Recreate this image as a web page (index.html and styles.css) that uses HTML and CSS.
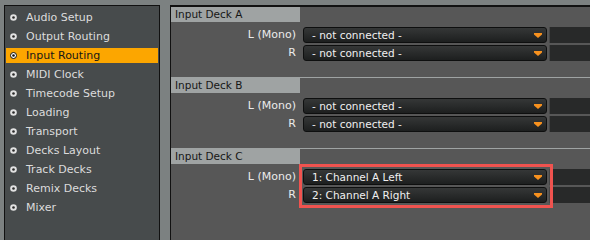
FILE: index.html
```html
<!DOCTYPE html>
<html>
<head>
<meta charset="utf-8">
<link rel="stylesheet" href="styles.css">
</head>
<body>
<div class="app">
  <nav class="sidebar">
    <ul class="menu">
      <li class="item"><svg class="dot" viewBox="0 0 7 7"><circle cx="3.5" cy="3.5" r="3.3" fill="#e2e2e2"/><circle cx="3.5" cy="3.5" r="1.3" fill="#2a2a2a"/></svg><span>Audio Setup</span></li>
      <li class="item"><svg class="dot" viewBox="0 0 7 7"><circle cx="3.5" cy="3.5" r="3.3" fill="#e2e2e2"/><circle cx="3.5" cy="3.5" r="1.3" fill="#2a2a2a"/></svg><span>Output Routing</span></li>
      <li class="item active"><svg class="dot" viewBox="0 0 7 7"><circle cx="3.5" cy="3.5" r="3" fill="#ffffff" stroke="#111" stroke-width="1"/><circle cx="3.5" cy="3.5" r="1.3" fill="#111"/></svg><span>Input Routing</span></li>
      <li class="item"><svg class="dot" viewBox="0 0 7 7"><circle cx="3.5" cy="3.5" r="3.3" fill="#e2e2e2"/><circle cx="3.5" cy="3.5" r="1.3" fill="#2a2a2a"/></svg><span>MIDI Clock</span></li>
      <li class="item"><svg class="dot" viewBox="0 0 7 7"><circle cx="3.5" cy="3.5" r="3.3" fill="#e2e2e2"/><circle cx="3.5" cy="3.5" r="1.3" fill="#2a2a2a"/></svg><span>Timecode Setup</span></li>
      <li class="item"><svg class="dot" viewBox="0 0 7 7"><circle cx="3.5" cy="3.5" r="3.3" fill="#e2e2e2"/><circle cx="3.5" cy="3.5" r="1.3" fill="#2a2a2a"/></svg><span>Loading</span></li>
      <li class="item"><svg class="dot" viewBox="0 0 7 7"><circle cx="3.5" cy="3.5" r="3.3" fill="#e2e2e2"/><circle cx="3.5" cy="3.5" r="1.3" fill="#2a2a2a"/></svg><span>Transport</span></li>
      <li class="item"><svg class="dot" viewBox="0 0 7 7"><circle cx="3.5" cy="3.5" r="3.3" fill="#e2e2e2"/><circle cx="3.5" cy="3.5" r="1.3" fill="#2a2a2a"/></svg><span>Decks Layout</span></li>
      <li class="item"><svg class="dot" viewBox="0 0 7 7"><circle cx="3.5" cy="3.5" r="3.3" fill="#e2e2e2"/><circle cx="3.5" cy="3.5" r="1.3" fill="#2a2a2a"/></svg><span>Track Decks</span></li>
      <li class="item"><svg class="dot" viewBox="0 0 7 7"><circle cx="3.5" cy="3.5" r="3.3" fill="#e2e2e2"/><circle cx="3.5" cy="3.5" r="1.3" fill="#2a2a2a"/></svg><span>Remix Decks</span></li>
      <li class="item"><svg class="dot" viewBox="0 0 7 7"><circle cx="3.5" cy="3.5" r="3.3" fill="#e2e2e2"/><circle cx="3.5" cy="3.5" r="1.3" fill="#2a2a2a"/></svg><span>Mixer</span></li>
    </ul>
  </nav>

  <main class="panel">
    <section class="deck">
      <div class="deck-head"><span class="deck-title">Input Deck A</span></div>
      <div class="deck-body">
        <span class="label">L (Mono)</span>
        <div class="select"><span>- not connected -</span><svg class="arrow" viewBox="0 0 8 5"><polygon points="0,0 8,0 8,1.4 4,5 0,1.4" fill="#f7911e"/></svg></div>
        <div class="aux"></div>
        <span class="label">R</span>
        <div class="select"><span>- not connected -</span><svg class="arrow" viewBox="0 0 8 5"><polygon points="0,0 8,0 8,1.4 4,5 0,1.4" fill="#f7911e"/></svg></div>
        <div class="aux"></div>
      </div>
    </section>

    <section class="deck">
      <div class="deck-head"><span class="deck-title">Input Deck B</span></div>
      <div class="deck-body">
        <span class="label">L (Mono)</span>
        <div class="select"><span>- not connected -</span><svg class="arrow" viewBox="0 0 8 5"><polygon points="0,0 8,0 8,1.4 4,5 0,1.4" fill="#f7911e"/></svg></div>
        <div class="aux"></div>
        <span class="label">R</span>
        <div class="select"><span>- not connected -</span><svg class="arrow" viewBox="0 0 8 5"><polygon points="0,0 8,0 8,1.4 4,5 0,1.4" fill="#f7911e"/></svg></div>
        <div class="aux"></div>
      </div>
    </section>

    <section class="deck">
      <div class="deck-head"><span class="deck-title">Input Deck C</span></div>
      <div class="deck-body">
        <span class="label">L (Mono)</span>
        <div class="select"><span>1: Channel A Left</span><svg class="arrow" viewBox="0 0 8 5"><polygon points="0,0 8,0 8,1.4 4,5 0,1.4" fill="#f7911e"/></svg></div>
        <div class="aux"></div>
        <span class="label">R</span>
        <div class="select"><span>2: Channel A Right</span><svg class="arrow" viewBox="0 0 8 5"><polygon points="0,0 8,0 8,1.4 4,5 0,1.4" fill="#f7911e"/></svg></div>
        <div class="aux"></div>
        <div class="mark"></div>
      </div>
    </section>
  </main>
</div>
</body>
</html>
```

FILE: styles.css
```css
html, body {
  margin: 0;
  height: 100%;
  overflow: hidden;
}

body {
  background: #7c8181;
  font-family: "DejaVu Sans", "Liberation Sans", sans-serif;
}

.app {
  box-sizing: border-box;
  display: flex;
  gap: 10px;
  padding: 5px 0 0 4px;
  height: 100%;
}

/* Sidebar */
.sidebar {
  width: 152px;
  flex: none;
  border: 1px solid #111;
  border-bottom: none;
  background: #474b4c;
  padding: 4px 1px 0;
  overflow: hidden;
}

.menu {
  list-style: none;
  margin: 0;
  padding: 0;
  display: flex;
  flex-direction: column;
  gap: 4px;
}

.item {
  height: 15px;
  display: flex;
  align-items: center;
  padding-left: 4px;
  color: #dcdcdc;
  font-size: 11px;
  white-space: nowrap;
}

.dot {
  width: 7px;
  height: 7px;
  margin-right: 9px;
  flex: none;
}

.item.active {
  background: #fca600;
  color: #161616;
}

/* Main panel */
.panel {
  flex: 1;
  min-width: 0;
  border-top: 2px solid #111;
  border-left: 1px solid #111;
  background: #575757;
  overflow: hidden;
}

.deck + .deck {
  border-top: 1px solid #9fa3a3;
}

.deck-head {
  height: 15px;
}

.deck-title {
  display: block;
  width: 125px;
  height: 15px;
  padding-left: 4px;
  background: #9fa3a3;
  color: #161616;
  font-size: 10.5px;
  line-height: 15px;
  white-space: nowrap;
}

.deck-body {
  position: relative;
  display: grid;
  grid-template-columns: 132px 244px 1fr;
  grid-auto-rows: 16px;
  row-gap: 2px;
  padding: 5px 0 16px;
}

.label {
  padding-right: 7px;
  text-align: right;
  color: #ebebeb;
  font-size: 11px;
  line-height: 16px;
  white-space: nowrap;
}

.select {
  box-sizing: border-box;
  display: flex;
  align-items: center;
  justify-content: space-between;
  padding: 0 4px 0 8px;
  border: 1px solid #0e0f0f;
  border-radius: 3px;
  background: linear-gradient(#353737, #1d1f1f);
  color: #f0f0f0;
  font-size: 10.5px;
  white-space: nowrap;
}

.arrow {
  width: 8px;
  height: 5px;
  flex: none;
}

.aux {
  margin-left: 2px;
  border-left: 1px solid #464747;
  background: #282929;
}

/* Annotation highlight drawn over the Deck C selectors */
.mark {
  position: absolute;
  top: 0;
  left: 128px;
  width: 254px;
  height: 44px;
  box-sizing: border-box;
  border: 3px solid #f0534f;
  pointer-events: none;
}
```
